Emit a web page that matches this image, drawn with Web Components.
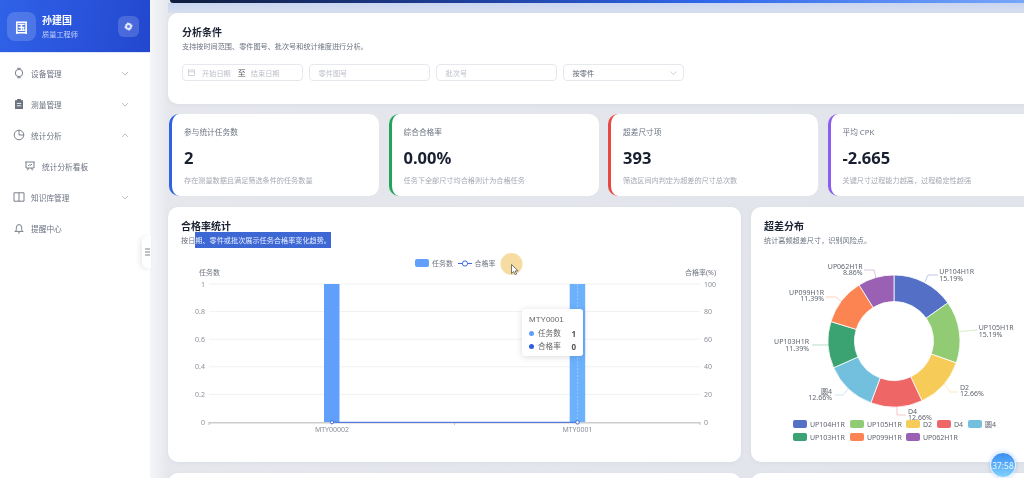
<!DOCTYPE html>
<html lang="zh">
<head>
<meta charset="utf-8">
<title>统计分析看板</title>
<style>
  html, body { margin: 0; height: 478px; overflow: hidden; background: #e3e6ec; }
  body { font-family: "Noto Sans", "Noto Sans CJK SC", sans-serif; }
</style>
</head>
<body>
<app-shell>
  <app-sidebar slot="side">
    <nav-item icon="chip" arrow="down">设备管理</nav-item>
    <nav-item icon="clip" arrow="down">测量管理</nav-item>
    <nav-item icon="pie" arrow="up">统计分析</nav-item>
    <nav-item icon="board" sub>统计分析看板</nav-item>
    <nav-item icon="book" arrow="down">知识库管理</nav-item>
    <nav-item icon="bell">提醒中心</nav-item>
  </app-sidebar>

  <page-card title-text="分析条件" sub="支持按时间范围、零件图号、批次号和统计维度进行分析。" style="height:91px;padding-left:14px">
    <filter-row>
      <date-field></date-field>
      <text-field>零件图号</text-field>
      <text-field>批次号</text-field>
      <text-field select>按零件</text-field>
    </filter-row>
  </page-card>

  <stat-row>
    <stat-card color="#2f62e0" label="参与统计任务数" value="2" desc="存在测量数据且满足筛选条件的任务数量"></stat-card>
    <stat-card color="#22a45d" label="综合合格率" value="0.00%" desc="任务下全部尺寸均合格则计为合格任务"></stat-card>
    <stat-card color="#e8483f" label="超差尺寸项" value="393" desc="筛选区间内判定为超差的尺寸总次数"></stat-card>
    <stat-card color="#8b5cf0" label="平均 CPK" value="-2.665" desc="关键尺寸过程能力越高，过程稳定性越强"></stat-card>
  </stat-row>

  <chart-row>
    <page-card title-text="合格率统计" style="height:255px">
      <span slot="sub">按日<span style="background:#3d67d3;color:#e8eeff;padding:3px 0">期、零件或批次展示任务合格率变化趋势。</span></span>
      <rate-chart>
        <chart-tooltip></chart-tooltip>
      </rate-chart>
    </page-card>
    <page-card title-text="超差分布" sub="统计高频超差尺寸，识别风险点。" style="height:255px">
      <dist-chart></dist-chart>
    </page-card>
  </chart-row>

  <chart-row>
    <page-card style="height:60px"></page-card>
    <page-card style="height:60px"></page-card>
  </chart-row>

  <timer-badge slot="over">37:58</timer-badge>
</app-shell>

<script>
const icons = {
  chip: '<circle cx="6" cy="6" r="3.7"/><path d="M4.2 1.3h3.6M4.2 10.7h3.6"/>',
  clip: '<path fill="currentColor" stroke="none" d="M2 2.2h2V1h4v1.2h2V11H2z"/><path stroke="#fff" stroke-width=".9" d="M3.8 5.4h4.4M3.8 7.8h4.4"/>',
  pie: '<circle cx="6" cy="6" r="4.8"/><path d="M6 1.2V6H10.8"/>',
  board: '<path d="M1.2 2h9.6M2 2v6h8V2M4.4 8l-.8 2.4M7.6 8l.8 2.4M4.2 6l1.4-1.4 1 .8L8 4"/>',
  book: '<path d="M1 1.8h10v8.4H1zM6 1.8v8.4"/>',
  bell: '<path d="M1.6 9.4h8.8M2.8 9.4Q3.4 8 3.4 5.2a2.6 2.6 0 0 1 5.2 0Q8.6 8 9.2 9.4M5 10.9h2"/>'
}

class AppShell extends HTMLElement {
  constructor () {
    super()
    this.attachShadow({ mode: 'open' }).innerHTML = `
      <style>
        :host { display: flex; width: 1024px; height: 478px; overflow: hidden; position: relative; filter: blur(.4px); }
        .side { flex: none; width: 150px; position: relative; z-index: 2; }
        .main { flex: none; width: 874px; box-sizing: border-box; padding-left: 18px; height: 478px;
          background: linear-gradient(90deg, #f5f6f9 0, #e5e7ed 18px, #e1e4ea 100%); overflow: hidden; }
        .banner { height: 3px; margin-left: 2px; width: 860px; border-bottom-left-radius: 5px;
          background: linear-gradient(90deg, #101c3c 0, #1f3f9c 35%, #2f66ea 62%, #78a8fa 100%); }
        .glow { height: 10px; margin-left: 0; width: 860px;
          background: linear-gradient(180deg, #c9d5f0, #d7def0); }
        .flow { display: flex; flex-direction: column; width: 869px; }
      </style>
      <div class="side"><slot name="side"></slot></div>
      <div class="main">
        <div class="banner"></div>
        <div class="glow"></div>
        <div class="flow"><slot></slot></div>
      </div>
      <slot name="over"></slot>`
  }
}

class AppSidebar extends HTMLElement {
  constructor () {
    super()
    this.attachShadow({ mode: 'open' }).innerHTML = `
      <style>
        :host { display: block; height: 478px; background: #fff; position: relative; }
        .head { height: 52px; display: flex; align-items: center; padding: 0 11px 0 7px;
          background: linear-gradient(100deg, #2f62e8, #2347cf); border-bottom: 1px solid #dfe6fa; box-sizing: content-box; }
        .logo { width: 29px; height: 29px; border-radius: 8px; background: rgba(255,255,255,.16); display: flex;
          align-items: center; justify-content: center; color: #fff; font-size: 13px; font-weight: 700; }
        .who { flex: 1; margin-left: 6px; }
        .name { font-size: 10px; font-weight: 700; color: #fff; line-height: 13px; }
        .role { font-size: 7.2px; color: #c3d2fb; line-height: 10px; margin-top: 2px; }
        .btn { width: 21px; height: 21px; border-radius: 6px; background: rgba(255,255,255,.17); display: flex;
          align-items: center; justify-content: center; }
        nav { padding-top: 4.5px; }
        .handle { position: absolute; left: 142px; top: 236px; width: 9px; height: 32px; background: #fff;
          border-radius: 6px 0 0 6px; box-shadow: -2px 1px 5px rgba(40,50,80,.1); display: flex;
          align-items: center; justify-content: flex-end; padding-right: 1px; box-sizing: border-box; }
      </style>
      <div class="head">
        <div class="logo">国</div>
        <div class="who"><div class="name">孙建国</div><div class="role">质量工程师</div></div>
        <div class="btn">
          <svg width="9" height="9" viewBox="0 0 12 12"><path fill="#dfe7ff" d="M6 .5l1.2 1.3 1.8-.3.6 1.7 1.7.6-.3 1.8L11.5 6l-1.5 1.1.3 1.8-1.7.6-.6 1.7-1.8-.3L6 11.5l-1.2-1.6-1.8.3-.6-1.7-1.7-.6.3-1.8L.5 6l1.5-1.1-.3-1.8 1.7-.6L4 .8l1.8.3z"/><circle cx="6" cy="6" r="1.9" fill="#5b7fe8"/></svg>
        </div>
      </div>
      <nav><slot></slot></nav>
      <div class="handle">
        <svg width="5" height="8" viewBox="0 0 5 8"><path d="M0 1h5M0 4h5M0 7h5" stroke="#666" stroke-width=".8"/></svg>
      </div>`
  }
}

class NavItem extends HTMLElement {
  connectedCallback () {
    const arrow = this.getAttribute('arrow')
    const d = arrow === 'up' ? 'M1 4l3-3 3 3' : 'M1 1l3 3 3-3'
    this.attachShadow({ mode: 'open' }).innerHTML = `
      <style>
        :host { display: flex; align-items: center; height: 31px; padding-left: 13px; padding-right: 21px;
          font-size: 7.7px; color: #6b7280; }
        :host([sub]) { padding-left: 24px; }
        .ic { width: 12px; height: 12px; margin-right: 6px; color: #6b7280; fill: none; stroke: currentColor; stroke-width: .9; }
        .tx { flex: 1; }
        .ar { fill: none; stroke: #b8bcc6; stroke-width: .9; }
      </style>
      <svg class="ic" viewBox="0 0 12 12">${icons[this.getAttribute('icon')]}</svg>
      <span class="tx"><slot></slot></span>
      ${arrow ? `<svg class="ar" width="8" height="5" viewBox="0 0 8 5"><path d="${d}"/></svg>` : ''}`
  }
}

class PageCard extends HTMLElement {
  connectedCallback () {
    const title = this.getAttribute('title-text')
    const sub = this.getAttribute('sub') || ''
    this.attachShadow({ mode: 'open' }).innerHTML = `
      <style>
        :host { display: block; box-sizing: border-box; background: #fff; border-radius: 10px; padding: 13px 13px 0;
          box-shadow: 0 1px 4px rgba(70,80,110,.05); min-width: 0; }
        .t { font-size: 10px; font-weight: 700; line-height: 12px; color: #1a2233; height: 12px; }
        .s { font-size: 7.15px; line-height: 13px; height: 13px; margin-top: 2px; color: #6b7280; white-space: nowrap; margin-bottom: 3px; }
      </style>
      ${title ? `<div class="t">${title}</div><div class="s"><slot name="sub">${sub}</slot></div>` : ''}
      <slot></slot>`
  }
}

class FilterRow extends HTMLElement {
  constructor () {
    super()
    this.attachShadow({ mode: 'open' }).innerHTML = `
      <style>:host { display: flex; gap: 6px; margin-top: 11px; }</style><slot></slot>`
  }
}

class DateField extends HTMLElement {
  constructor () {
    super()
    this.attachShadow({ mode: 'open' }).innerHTML = `
      <style>
        :host { display: flex; align-items: center; box-sizing: border-box; width: 121px; height: 17px;
          border: 1px solid #e6e8ee; border-radius: 4px; padding-left: 5px; font-size: 7.2px; color: #bcc0c8; }
        svg { margin-right: 7px; }
        b { font-weight: 400; font-size: 8px; color: #555; margin: 0 5px 0 7px; }
      </style>
      <svg width="7" height="7" viewBox="0 0 7 7" fill="none" stroke="#bcc0c8" stroke-width=".7"><rect x=".5" y="1" width="6" height="5.5"/><path d="M.5 2.8h6"/></svg>
      <span>开始日期</span><b>至</b><span>结束日期</span>`
  }
}

class TextField extends HTMLElement {
  connectedCallback () {
    const select = this.hasAttribute('select')
    this.attachShadow({ mode: 'open' }).innerHTML = `
      <style>
        :host { display: flex; align-items: center; justify-content: space-between; box-sizing: border-box; width: 121px; height: 17px;
          border: 1px solid #e6e8ee; border-radius: 4px; padding: 0 6px 0 8.5px; font-size: 7.2px;
          color: ${select ? '#5f6672' : '#bcc0c8'}; }
      </style>
      <span><slot></slot></span>
      ${select ? '<svg width="7" height="4" viewBox="0 0 7 4" fill="none" stroke="#b8bcc6" stroke-width=".7"><path d="M.5.5l3 3 3-3"/></svg>' : ''}`
  }
}

class StatRow extends HTMLElement {
  constructor () {
    super()
    this.attachShadow({ mode: 'open' }).innerHTML = `
      <style>:host { display: grid; grid-template-columns: repeat(4, 210px); gap: 9.5px; margin: 10px 0 11px 1px; }</style><slot></slot>`
  }
}

class StatCard extends HTMLElement {
  connectedCallback () {
    const a = n => this.getAttribute(n)
    this.attachShadow({ mode: 'open' }).innerHTML = `
      <style>
        :host { display: block; box-sizing: border-box; height: 82px; background: #fff; border-radius: 10px;
          border-left: 3px solid ${a('color')}; padding: 13px 0 0 12px; }
        .l { font-size: 7.7px; line-height: 10px; color: #6b7280; }
        .v { font-size: 16.5px; font-weight: 700; line-height: 22px; margin-top: 10px; color: #171f30; }
        .d { font-size: 7.15px; line-height: 10px; margin-top: 6px; color: #a4a9b3; white-space: nowrap; }
      </style>
      <div class="l">${a('label')}</div><div class="v">${a('value')}</div><div class="d">${a('desc')}</div>`
  }
}

class ChartRow extends HTMLElement {
  constructor () {
    super()
    this.attachShadow({ mode: 'open' }).innerHTML = `
      <style>:host { display: grid; grid-template-columns: 573px 286px; gap: 10px; margin-bottom: 11px; }</style><slot></slot>`
  }
}

class RateChart extends HTMLElement {
  connectedCallback () {
    const ys = [284, 311.6, 339.2, 366.8, 394.4, 422]
    const left = ['1', '0.8', '0.6', '0.4', '0.2', '0']
    const right = ['100', '80', '60', '40', '20', '0']
    const grid = ys.slice(0, 5).map(y => `<path d="M209 ${y}H700" stroke="#f0f1f3" stroke-width="1"/>`).join('')
    const lab = ys.map((y, i) => `<text x="205" y="${y + 2.5}" text-anchor="end">${left[i]}</text><text x="704" y="${y + 2.5}">${right[i]}</text>`).join('')
    this.attachShadow({ mode: 'open' }).innerHTML = `
      <style>
        :host { display: block; position: relative; width: 547px; height: 200px; }
        svg { display: block; }
        text { font-family: "Noto Sans", "Noto Sans CJK SC", sans-serif; font-size: 7px; fill: #8a8f98; }
        .k { fill: #6e7480; }
      </style>
      <svg width="547" height="200" viewBox="181 250 547 200">
        ${grid}
        <rect x="324" y="284" width="15.5" height="138.5" fill="#60a0fa"/>
        <rect x="569.7" y="284" width="15.5" height="138.5" fill="#6cb1fc"/>
        <path d="M577.5 284V422" stroke="#a9d2fd" stroke-width=".7" stroke-dasharray="2 1.5"/>
        <path d="M209 422.8H700" stroke="#ccc" stroke-width="1.4"/>
        <path d="M209 422v3M454.5 422v3M700 422v3" stroke="#aaa" stroke-width=".7"/>
        <path d="M332 422.3H577.5" stroke="#3c68e0" stroke-width="1"/>
        <circle cx="332" cy="422.3" r="1.6" fill="#fff" stroke="#3c68e0"/>
        <circle cx="577.5" cy="422.3" r="1.8" fill="#fff" stroke="#3c68e0"/>
        ${lab}
        <text x="199" y="274.5" class="k">任务数</text>
        <text x="685" y="274.5" class="k">合格率(%)</text>
        <text x="332" y="432" text-anchor="middle">MTY00002</text>
        <text x="577.5" y="432" text-anchor="middle">MTY0001</text>
        <rect x="415" y="259" width="14" height="8" rx="2" fill="#60a0fa"/>
        <text x="432" y="265.5" class="k">任务数</text>
        <path d="M458 263.5h14" stroke="#3c68e0"/>
        <circle cx="465" cy="263.5" r="2.6" fill="#fff" stroke="#3c68e0"/>
        <text x="474.5" y="265.5" class="k">合格率</text>
        <circle cx="511.5" cy="264" r="11" fill="#f7dca2"/>
        <path d="M511.5 264.5v9l2.2-2 1.5 3.2 1.4-.7-1.5-3.1h3z" fill="#fff" stroke="#555" stroke-width=".8"/>
      </svg>
      <slot></slot>`
  }
}

class ChartTooltip extends HTMLElement {
  constructor () {
    super()
    this.attachShadow({ mode: 'open' }).innerHTML = `
      <style>
        :host { position: absolute; left: 341px; top: 59px; width: 61px; height: 47px; box-sizing: border-box; background: #fff;
          border-radius: 3px; box-shadow: 0 1px 6px rgba(30,40,60,.16); padding: 5.5px 7px; font-size: 7.6px; color: #666; }
        .h { line-height: 10px; margin-bottom: 2px; font-family: "Liberation Sans", sans-serif; font-size: 8px; }
        .r { display: flex; align-items: center; line-height: 13px; height: 13px; }
        i { width: 5px; height: 5px; border-radius: 50%; margin-right: 4px; }
        span { flex: 1; }
        b { color: #555; font-size: 8px; }
      </style>
      <div class="h">MTY0001</div>
      <div class="r"><i style="background:#60a0fa"></i><span>任务数</span><b>1</b></div>
      <div class="r"><i style="background:#2f5fe0"></i><span>合格率</span><b>0</b></div>`
  }
}

class DistChart extends HTMLElement {
  connectedCallback () {
    const cx = 894
    const cy = 341
    const R = 66
    const r = 39.5
    const data = [
      ['UP104H1R', 15.19, '#5470c6'], ['UP105H1R', 15.19, '#91cc75'], ['D2', 12.66, '#f6cb58'], ['D4', 12.66, '#ee6666'],
      ['圆4', 12.66, '#73c0de'], ['UP103H1R', 11.39, '#3ba272'], ['UP099H1R', 11.39, '#fc8452'], ['UP062H1R', 8.86, '#9a60b4']
    ]
    // leader line, label x, first line y, anchor
    const labels = [
      ['M925 282L928 275H938', 939.3, 274, 'start'],
      ['M960 331.5L977 330', 978.7, 330, 'start'],
      ['M944 383L950 392H958', 960, 389.5, 'start'],
      ['M897 407V415H906', 908, 413.5, 'start'],
      ['M848 389L843 395H835', 832, 393.5, 'end'],
      ['M828 345H812', 809, 344, 'end'],
      ['M842 302L836 297H826', 824, 294.5, 'end'],
      ['M876 278L874 270H864', 862.7, 268.5, 'end']
    ]
    let a = -Math.PI / 2
    let slices = ''
    let text = ''
    const total = data.reduce((s, d) => s + d[1], 0)
    data.forEach((d, i) => {
      const b = a + d[1] / total * Math.PI * 2
      const p = (rad, ang) => `${(cx + rad * Math.cos(ang)).toFixed(2)} ${(cy + rad * Math.sin(ang)).toFixed(2)}`
      const big = b - a > Math.PI ? 1 : 0
      slices += `<path d="M${p(R, a)}A${R} ${R} 0 ${big} 1 ${p(R, b)}L${p(r, b)}A${r} ${r} 0 ${big} 0 ${p(r, a)}Z" fill="${d[2]}" stroke="#fff" stroke-width=".8"/>`
      const l = labels[i]
      text += `<path d="${l[0]}" fill="none" stroke="${d[2]}" stroke-opacity=".55" stroke-width=".7"/>`
      // one text per label, both lines in it
      text += `<text text-anchor="${l[3]}"><tspan x="${l[1]}" y="${l[2]}">${d[0]}</tspan><tspan x="${l[1]}" y="${l[2] + 6.8}">${d[1]}%</tspan></text>`
      a = b
    })
    const legend = [[793, 424, 0], [850, 424, 1], [906, 424, 2], [937, 424, 3], [968, 424, 4], [793, 437, 5], [850, 437, 6], [906, 437, 7]]
      .map(([x, y, i]) => `<rect x="${x}" y="${y - 4}" width="14" height="8" rx="2" fill="${data[i][2]}"/><text x="${x + 17}" y="${y + 2.5}">${data[i][0]}</text>`).join('')
    this.attachShadow({ mode: 'open' }).innerHTML = `
      <style>
        :host { display: block; width: 260px; height: 200px; }
        svg { display: block; overflow: visible; }
        text { font-family: "Noto Sans", "Noto Sans CJK SC", sans-serif; font-size: 7px; fill: #5f656f; }
      </style>
      <svg width="260" height="200" viewBox="764 250 260 200">${slices}${text}${legend}</svg>`
  }
}

class TimerBadge extends HTMLElement {
  constructor () {
    super()
    this.attachShadow({ mode: 'open' }).innerHTML = `
      <style>
        :host { position: absolute; left: 990px; top: 452px; width: 26px; height: 26px; box-sizing: border-box; border-radius: 50%;
          border: 1px solid #e4f2ff; background: linear-gradient(180deg, #3a8df2, #80d2fc); color: #e8f6ff;
          font-size: 8.4px; display: flex; align-items: center; justify-content: center; box-shadow: 0 0 4px rgba(60,130,240,.35); z-index: 3; }
      </style>
      <slot></slot>`
  }
}

customElements.define('app-shell', AppShell)
customElements.define('app-sidebar', AppSidebar)
customElements.define('nav-item', NavItem)
customElements.define('page-card', PageCard)
customElements.define('filter-row', FilterRow)
customElements.define('date-field', DateField)
customElements.define('text-field', TextField)
customElements.define('stat-row', StatRow)
customElements.define('stat-card', StatCard)
customElements.define('chart-row', ChartRow)
customElements.define('rate-chart', RateChart)
customElements.define('chart-tooltip', ChartTooltip)
customElements.define('dist-chart', DistChart)
customElements.define('timer-badge', TimerBadge)
</script>
</body>
</html>
